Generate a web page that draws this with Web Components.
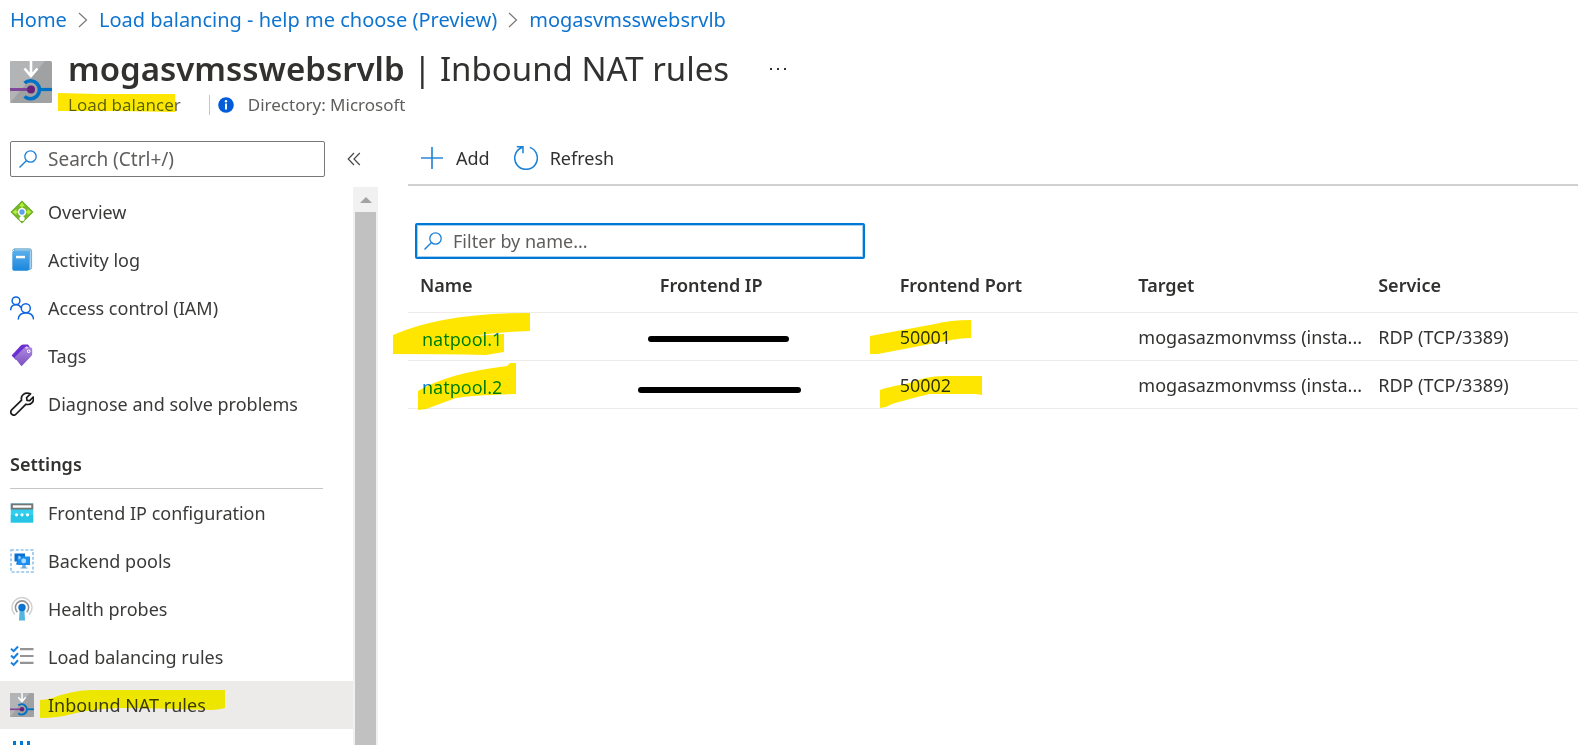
<!DOCTYPE html>
<html lang="en">
<head>
<meta charset="utf-8">
<title>mogasvmsswebsrvlb | Inbound NAT rules</title>
<style>
  html, body { height: 100%; margin: 0; }
  body {
    background: #fff; color: #323130; overflow: hidden;
    font-family: "Noto Sans", "Open Sans", sans-serif; font-size: 18px; line-height: 24px;
  }
</style>
</head>
<body>
<portal-page>
  <bread-crumbs slot="crumbs">
    <crumb-link href="#home">Home</crumb-link>
    <crumb-link href="#choose">Load balancing - help me choose (Preview)</crumb-link>
    <crumb-link href="#lb">mogasvmsswebsrvlb</crumb-link>
  </bread-crumbs>
  <blade-header slot="header">
    <span slot="name">mogasvmsswebsrvlb</span>
    <span slot="section">Inbound NAT rules</span>
    <span slot="kind">Load balancer</span>
    <span slot="directory">Directory: Microsoft</span>
  </blade-header>
  <side-menu slot="side">
    <menu-item icon="overview">Overview</menu-item>
    <menu-item icon="log">Activity log</menu-item>
    <menu-item icon="people">Access control (IAM)</menu-item>
    <menu-item icon="tags">Tags</menu-item>
    <menu-item icon="wrench">Diagnose and solve problems</menu-item>
    <menu-heading>Settings</menu-heading>
    <menu-item icon="frontend">Frontend IP configuration</menu-item>
    <menu-item icon="pools">Backend pools</menu-item>
    <menu-item icon="probe">Health probes</menu-item>
    <menu-item icon="rules">Load balancing rules</menu-item>
    <menu-item icon="nat" current>Inbound NAT rules</menu-item>
    <menu-item icon="properties"></menu-item>
  </side-menu>
  <command-bar slot="main">
    <command-button icon="add">Add</command-button>
    <command-button icon="refresh">Refresh</command-button>
  </command-bar>
  <search-field class="filter" slot="main" label="Filter by name" placeholder="Filter by name..." active></search-field>
  <rules-table slot="main"></rules-table>
</portal-page>

<script>
const ICONS = {
  nat: ['0 0 42 42', `<rect width="42" height="42" rx="1.5" fill="#a0a1a2"/><path d="M0 1.500Q0 0 1.500 0H35L0 42z" fill="#b3b4b5"/>
    <path d="M21 0v13M14.500 7.500L21 15l6.500-7.500" fill="none" stroke="#fff" stroke-width="2.600"/>
    <path d="M0 28.500h21" stroke="#804998" stroke-width="3"/>
    <path d="M14.500 22a9 9 0 1 1 0 13.500" fill="none" stroke="#0072c6" stroke-width="3.600"/>
    <path d="M30 28.500h12" stroke="#0072c6" stroke-width="3.200"/><circle cx="21" cy="28.500" r="4" fill="#68217a"/>`],
  overview: ['0 0 24 24', `<path d="M12 .5L23.500 12 12 23.500.5 12z" fill="#66a81f"/><path d="M12 1.500L22.500 12 12 22.500 1.500 12z" fill="#74b72b"/>
    <path d="M12 6v13M5 12h14" stroke="#b8ee3c" stroke-width="1.500"/>
    <path d="M12 2.500l3 3.800H9zM2.500 12L6.500 9v6zM21.500 12l-4-3v6z" fill="#b8ee3c"/>
    <path d="M12 14v4" stroke="#fff" stroke-width="2"/><circle cx="12" cy="18.500" r="2.600" fill="#fff"/>
    <circle cx="12" cy="12" r="4" fill="#fff"/><circle cx="12" cy="12" r="2.700" fill="#5ea0ef"/>`],
  log: ['0 0 24 24', `<defs><linearGradient id="g" x2="0" y2="1"><stop offset="0" stop-color="#5ab0ec"/><stop offset="1" stop-color="#1986dc"/></linearGradient></defs>
    <path d="M4.500.8h15Q21.600.8 21.600 3v16.500q0 2-2 2H4.500z" fill="#a9cfea" stroke="#5c9cc7" stroke-width=".8"/>
    <path d="M2.400 3.200Q2.400 1 4.600 1M19.500 2v20" fill="none" stroke="#67a5cd" stroke-width=".8"/>
    <path d="M2.300 4Q3 2.400 5 2.400h14V21q0 1.800-1.800 1.800H4.100q-1.800 0-1.800-1.800z" fill="url(#g)"/>
    <rect x="6" y="7.800" width="9" height="2.500" fill="#fff"/>`],
  people: ['0 0 24 24', `<g fill="none" stroke="#0b63e0" stroke-width="1.500"><circle cx="6" cy="4.800" r="3.900"/><path d="M.7 14.200C.7 8 8 6.600 11 11.500"/>
    <circle cx="15.800" cy="12.200" r="4.500"/><path d="M8.200 23.500c0-9 15.400-9 15.400 0"/></g>`],
  tags: ['0 0 24 24', `<defs><linearGradient id="g" x2="0" y2="1"><stop offset="0" stop-color="#b08be0"/><stop offset="1" stop-color="#7a4fc0"/></linearGradient></defs>
    <path d="M1.600 11.500L11 1.300Q12 .6 13.300.6H18l2 3L6 16z" fill="#6c2fd0"/>
    <path d="M4.500 13.500L14.500 3.500q1-.9 2.500-.7l4 .6q1.200.2 1.200 1.500v5q0 1.200-.8 2L11.500 22.300z" fill="url(#g)"/>
    <circle cx="18.700" cy="7.300" r="1.700" fill="#fff"/><circle cx="16.700" cy="3.600" r="1.100" fill="#e9ddf8"/><circle cx="18.700" cy="7.300" r=".7" fill="#8253c5"/>`],
  wrench: ['0 0 24 24', `<path d="M20.500 1.800L16.600 5.600l.4 2.800 2.700.3 3.500-3.700c1.400 4.800-2.600 8.500-7.200 7.200L6.200 22c-3.200 3.100-7.500-1.200-4.300-4.300l9.700-9.500C10.300 3.500 14.800-.6 20.500 1.800z" fill="none" stroke="#1b1a19" stroke-width="1.700" stroke-linejoin="round"/>`],
  frontend: ['0 0 24 24', `<rect x=".8" y="2.500" width="22.400" height="19" fill="#32d0f0"/><path d="M.8 14h22.400v7.500H.8z" fill="#27c4e6"/><path d="M.8 2.500h22.400v6H.8z" fill="#757575"/>
    <rect x="2.800" y="4.300" width="18.500" height="2.400" fill="#fff"/><g fill="#fff"><circle cx="6.500" cy="13.800" r="1.600"/><circle cx="12" cy="13.800" r="1.600"/><circle cx="17.500" cy="13.800" r="1.600"/></g>`],
  pools: ['0 0 24 24', `<rect x="1" y="1" width="22" height="22" fill="none" stroke="#8fc2ec" stroke-width="1.600" stroke-dasharray="3 1.800"/>
    <path d="M4.500 4.500h10.500v8H4.500zM7 12.500h3l1 3H6z" fill="#0a6fd0"/><path d="M7.500 7.500h12.500v8.500H7.500z" fill="#1d8df0"/>
    <path d="M12.500 16h3l.5 2.500h1.500V19.500h-7v-1h1.500z" fill="#6ea8d8"/><path d="M8.500 6.500l2 1v2l-2 1zM13.700 9.300l2.300 1.300v2.600l-2.300 1.300-2.300-1.300v-2.600z" fill="#a8dcff"/>`],
  probe: ['0 0 24 24', `<g fill="none"><circle cx="12" cy="10.500" r="10" stroke="#cfcfcf" stroke-width="1.300" stroke-dasharray="47 16" transform="rotate(135 12 10.500)"/>
    <circle cx="12" cy="10.500" r="6.600" stroke="#949494" stroke-width="1.600" stroke-dasharray="31 11" transform="rotate(135 12 10.500)"/></g>
    <path d="M9.600 13h4.800l.6 10.500H9z" fill="#55b4e0"/><circle cx="12" cy="10.500" r="3.700" fill="#0a72cf"/>`],
  rules: ['0 0 24 24', `<path d="M10 4.200h13.500M10 11h13.500M10 17.900h13.500" stroke="#949494" stroke-width="2.200"/>
    <path d="M1 3.800l2.700 2.400L8 1.500M1 10.600l2.700 2.400L8 8.300M1 17.500l2.700 2.400L8 15.200" fill="none" stroke="#1a80e0" stroke-width="2"/>`],
  properties: ['0 0 24 24', `<path d="M3 0h3v24H3zM10 0h3v24h-3zM17 0h3v24h-3z" fill="#0078d4"/>`],
  search: ['0 0 18 18', `<circle cx="11.500" cy="6.500" r="5.700" fill="none" stroke="#1a80d8" stroke-width="1.300"/><path d="M7.300 10.700L.5 17.500" stroke="#1a80d8" stroke-width="1.400"/>`],
  add: ['0 0 24 24', `<path d="M12 1v22M1 12h22" stroke="#2b88d8" stroke-width="1.700"/>`],
  refresh: ['0 0 24 24', `<path d="M15.800 1.400A11.300 11.300 0 1 1 8 1.500M2.800.8H9v6.400" fill="none" stroke="#1a80d8" stroke-width="1.500"/>`],
  info: ['0 0 16 16', `<circle cx="8" cy="8" r="7.800" fill="#015cda"/><circle cx="8" cy="4.200" r="1.200" fill="#fff"/><path d="M8 6.600v6" stroke="#fff" stroke-width="1.900"/>`],
  chevron: ['0 0 10 16', `<path d="M1 1l7.500 7L1 15" fill="none" stroke="#7a7876" stroke-width="1.200"/>`],
  collapse: ['0 0 14 14', `<path d="M7 1L1.200 7 7 13M12.800 1L7 7l5.800 6" fill="none" stroke="#484644" stroke-width="1.200"/>`],
  more: ['0 0 18 4', `<path d="M1 1h2v2H1zM8 1h2v2H8zM15 1h2v2h-2z" fill="#323130"/>`],
};

// Each mark's box is measured from the top left corner of the text it lies over.
const MARKS = {
  kind: [-10, 0, 117, 20, 'M0 0L40 1H117V19L60 18H0z'],
  nav: [-8, -3, 185, 28, 'M0 10Q6 10 12 8Q34 0 52 0H185V18Q182 19 172 20Q110 18 80 18Q50 19 32 24Q18 28 0 28z'],
  nat1: [-27, -14, 137, 42, 'M0 22Q50 0 137 0V18Q105 19 80 23L111 21V39L93 42Q50 41 0 41z'],
  nat2: [-2, -12, 98, 47, 'M0 28Q30 10 89 3L92 0H98V31Q55 32 38 35L8 46L0 47z'],
  port1: [-30, -5, 101, 34, 'M0 16L65 4Q80 0 101 0V18Q90 18 76 21L8 34H0z'],
  port2: [-20, 3, 102, 32, 'M0 14Q4 12 30 7Q46 0 64 0H102V19L96 18H50Q40 20 12 28L6 31L0 32z'],
};

function define(name, markup, setup) {
  const template = document.createElement('template');
  template.innerHTML = markup;
  customElements.define(name, class extends HTMLElement {
    constructor() {
      super();
      this.attachShadow({ mode: 'open' }).append(template.content.cloneNode(true));
    }
    connectedCallback() { if (setup) setup(this, this.shadowRoot); }
  });
}

customElements.define('ui-icon', class extends HTMLElement {
  static observedAttributes = ['name'];
  constructor() {
    super();
    this.attachShadow({ mode: 'open' });
  }
  attributeChangedCallback(attribute, before, name) {
    const [box, body] = ICONS[name];
    this.shadowRoot.innerHTML = `<style>
      :host { display: block; flex: none; width: 24px; height: 24px; }
      svg { display: block; width: 100%; height: 100%; }
    </style><svg viewBox="${box}" aria-hidden="true">${body}</svg>`;
  }
});

define('marker-stroke', `<style>
  :host { position: absolute; mix-blend-mode: darken; pointer-events: none; }
  svg { display: block; }
</style>`, (host, root) => {
  const [x, y, w, h, d] = MARKS[host.getAttribute('shape')];
  host.style.left = x + 'px';
  host.style.top = y + 'px';
  root.innerHTML += `<svg width="${w}" height="${h}" viewBox="0 0 ${w} ${h}"><path d="${d}" fill="#ffe600"/></svg>`;
});

define('portal-page', `<style>
  :host { display: flex; flex-direction: column; height: 100vh; }
  .body { display: flex; flex: 1; min-height: 0; gap: 30px; }
  main { flex: 1; min-width: 0; }
  ::slotted(.filter) { margin: 37px 0 0 7px; max-width: 450px; }
</style>
<slot name="crumbs"></slot><slot name="header"></slot>
<div class="body"><slot name="side"></slot><main><slot name="main"></slot></main></div>`);

define('bread-crumbs', `<style>
  :host { display: block; }
  nav { display: flex; align-items: center; height: 40px; padding-left: 10px; }
</style><nav aria-label="Breadcrumb"><slot></slot></nav>`);

define('crumb-link', `<style>
  :host { display: flex; align-items: center; font-size: 20px; }
  a { color: #0f74cf; text-decoration: none; white-space: nowrap; }
  ui-icon { width: 10px; height: 16px; margin: 0 11px; }
  :host(:last-of-type) ui-icon { display: none; }
</style><a><slot></slot></a><ui-icon name="chevron"></ui-icon>`, (host, root) => {
  root.querySelector('a').href = host.getAttribute('href');
});

define('blade-header', `<style>
  :host { display: flex; gap: 16px; height: 91px; padding-left: 10px; box-sizing: border-box; white-space: nowrap; }
  .logo { width: 42px; height: 42px; margin-top: 21px; }
  .title { display: flex; align-items: center; gap: 40px; padding-top: 5px; }
  h1 { margin: 0; font-size: 33px; line-height: 48px; font-weight: 400; }
  b { font-weight: 600; }
  button { border: 0; background: none; padding: 0; }
  button ui-icon { width: 18px; height: 4px; }
  .sub { display: flex; align-items: center; font-size: 17px; color: #605e5c; }
  .kind { position: relative; }
  .dir { display: flex; align-items: center; border-left: 1px solid #c8c6c4; margin-left: 28px; padding-left: 8px; line-height: 20px; }
  .dir ui-icon { width: 16px; height: 16px; margin-right: 14px; }
</style>
<ui-icon class="logo" name="nat"></ui-icon>
<div>
  <div class="title"><h1><b><slot name="name"></slot></b> | <slot name="section"></slot></h1>
    <button aria-label="More"><ui-icon name="more"></ui-icon></button></div>
  <div class="sub"><span class="kind"><slot name="kind"></slot><marker-stroke shape="kind"></marker-stroke></span>
    <span class="dir"><ui-icon name="info"></ui-icon><slot name="directory"></slot></span></div>
</div>`);

define('search-field', `<style>
  :host { display: block; font-size: 19px; }
  :host([active]) { font-size: 18px; }
  label { display: flex; align-items: center; gap: 11px; height: 36px; box-sizing: border-box; padding-left: 8px; border: 1px solid #7a7876; border-radius: 2px; }
  :host([active]) label { border: 2px solid #0078d4; box-shadow: inset 0 0 0 1px #a6d0f0; padding-left: 7px; }
  ui-icon { width: 18px; height: 18px; }
  input { flex: 1; min-width: 0; border: 0; padding: 0; outline: 0; background: none; font: inherit; color: #323130; }
  input::placeholder { color: #605e5c; opacity: 1; }
</style><label><ui-icon name="search"></ui-icon><input type="text"></label>`, (host, root) => {
  const input = root.querySelector('input');
  input.placeholder = host.getAttribute('placeholder');
  input.setAttribute('aria-label', host.getAttribute('label'));
});

define('side-menu', `<style>
  :host { display: flex; flex-direction: column; flex: none; width: 378px; min-height: 0; }
  .top { display: flex; align-items: center; gap: 22px; padding: 10px 0 10px 10px; }
  search-field { width: 315px; }
  button { border: 0; background: none; padding: 0; }
  button ui-icon { width: 14px; height: 14px; }
  .scroll { display: flex; flex: 1; min-height: 0; }
  nav { flex: 1; overflow: hidden; padding-top: 1px; }
</style>
<div class="top"><search-field label="Search" placeholder="Search (Ctrl+/)"></search-field>
  <button aria-label="Collapse menu"><ui-icon name="collapse"></ui-icon></button></div>
<div class="scroll"><nav aria-label="Resource menu"><slot></slot></nav><scroll-track></scroll-track></div>`);

define('scroll-track', `<style>
  :host { display: flex; flex-direction: column; width: 25px; background: #f1f1f1; }
  .up { display: flex; align-items: center; justify-content: center; height: 25px; }
  .up::before { content: ""; border: 6px solid transparent; border-top: 0; border-bottom-color: #a3a3a3; }
  .thumb { flex: 1; margin: 0 2px; background: #c1c1c1; }
</style><div class="up"></div><div class="thumb"></div>`);

define('menu-item', `<style>
  :host { display: block; }
  :host([current]) { background: #edebe9; }
  a { display: flex; align-items: center; gap: 14px; height: 48px; padding-left: 10px; color: #3b3a39; text-decoration: none; }
  .text { position: relative; white-space: nowrap; }
</style><a><ui-icon></ui-icon><span class="text"><slot></slot></span></a>`, (host, root) => {
  const link = root.querySelector('a');
  root.querySelector('ui-icon').setAttribute('name', host.getAttribute('icon'));
  link.href = '#' + host.getAttribute('icon');
  if (!host.textContent) link.setAttribute('aria-label', 'Properties');
  if (host.hasAttribute('current')) {
    link.setAttribute('aria-current', 'page');
    const mark = document.createElement('marker-stroke');
    mark.setAttribute('shape', 'nav');
    root.querySelector('.text').append(mark);
  }
});

define('menu-heading', `<style>
  :host { display: block; padding: 0 30px 0 10px; }
  h2 { margin: 0; padding: 24px 0 12px; border-bottom: 1px solid #c8c6c4; font-size: 18px; line-height: 24px; font-weight: 600; }
</style><h2><slot></slot></h2>`);

define('command-bar', `<style>
  :host { display: flex; align-items: center; gap: 24px; height: 53px; padding-left: 12px; border-bottom: 2px solid #d2d0ce; }
</style><slot></slot>`);

define('command-button', `<style>
  :host { display: block; }
  button { display: flex; align-items: center; gap: 12px; border: 0; padding: 0; background: none; color: #323130; font: inherit; }
</style><button><ui-icon></ui-icon><slot></slot></button>`, (host, root) => {
  root.querySelector('ui-icon').setAttribute('name', host.getAttribute('icon'));
});

define('rules-table', `<style>
  :host { display: block; }
  table { width: 100%; table-layout: fixed; border-collapse: separate; border-spacing: 0; }
  th, td { box-sizing: border-box; height: 48px; padding: 0 0 0 12px; border-bottom: 1px solid #edebe9; text-align: left; white-space: nowrap; }
  th { height: 54px; padding-bottom: 2px; font-weight: 600; }
  td:first-child { padding-top: 4px; }
  col { width: 20.5%; }
  col.port { width: 20.4%; }
  col.service { width: auto; }
  .cell { position: relative; display: inline-block; }
  a { color: #0078d4; text-decoration: none; margin-left: 2px; }
  .redacted { display: block; height: 6px; border-radius: 3px; background: #000; }
  .short { width: 141px; margin: 4px 0 0 -12px; }
  .long { width: 163px; margin: 10px 0 0 -22px; }
</style>
<table>
  <colgroup><col><col><col class="port"><col><col class="service"></colgroup>
  <thead><tr><th>Name</th><th>Frontend IP</th><th>Frontend Port</th><th>Target</th><th>Service</th></tr></thead>
  <tbody>
    <tr><td><span class="cell"><a href="#natpool.1">natpool.1</a><marker-stroke shape="nat1"></marker-stroke></span></td>
      <td><span class="redacted short"></span></td>
      <td><span class="cell">50001<marker-stroke shape="port1"></marker-stroke></span></td>
      <td>mogasazmonvmss (insta...</td><td>RDP (TCP/3389)</td></tr>
    <tr><td><span class="cell"><a href="#natpool.2">natpool.2</a><marker-stroke shape="nat2"></marker-stroke></span></td>
      <td><span class="redacted long"></span></td>
      <td><span class="cell">50002<marker-stroke shape="port2"></marker-stroke></span></td>
      <td>mogasazmonvmss (insta...</td><td>RDP (TCP/3389)</td></tr>
  </tbody>
</table>`);
</script>
</body>
</html>
